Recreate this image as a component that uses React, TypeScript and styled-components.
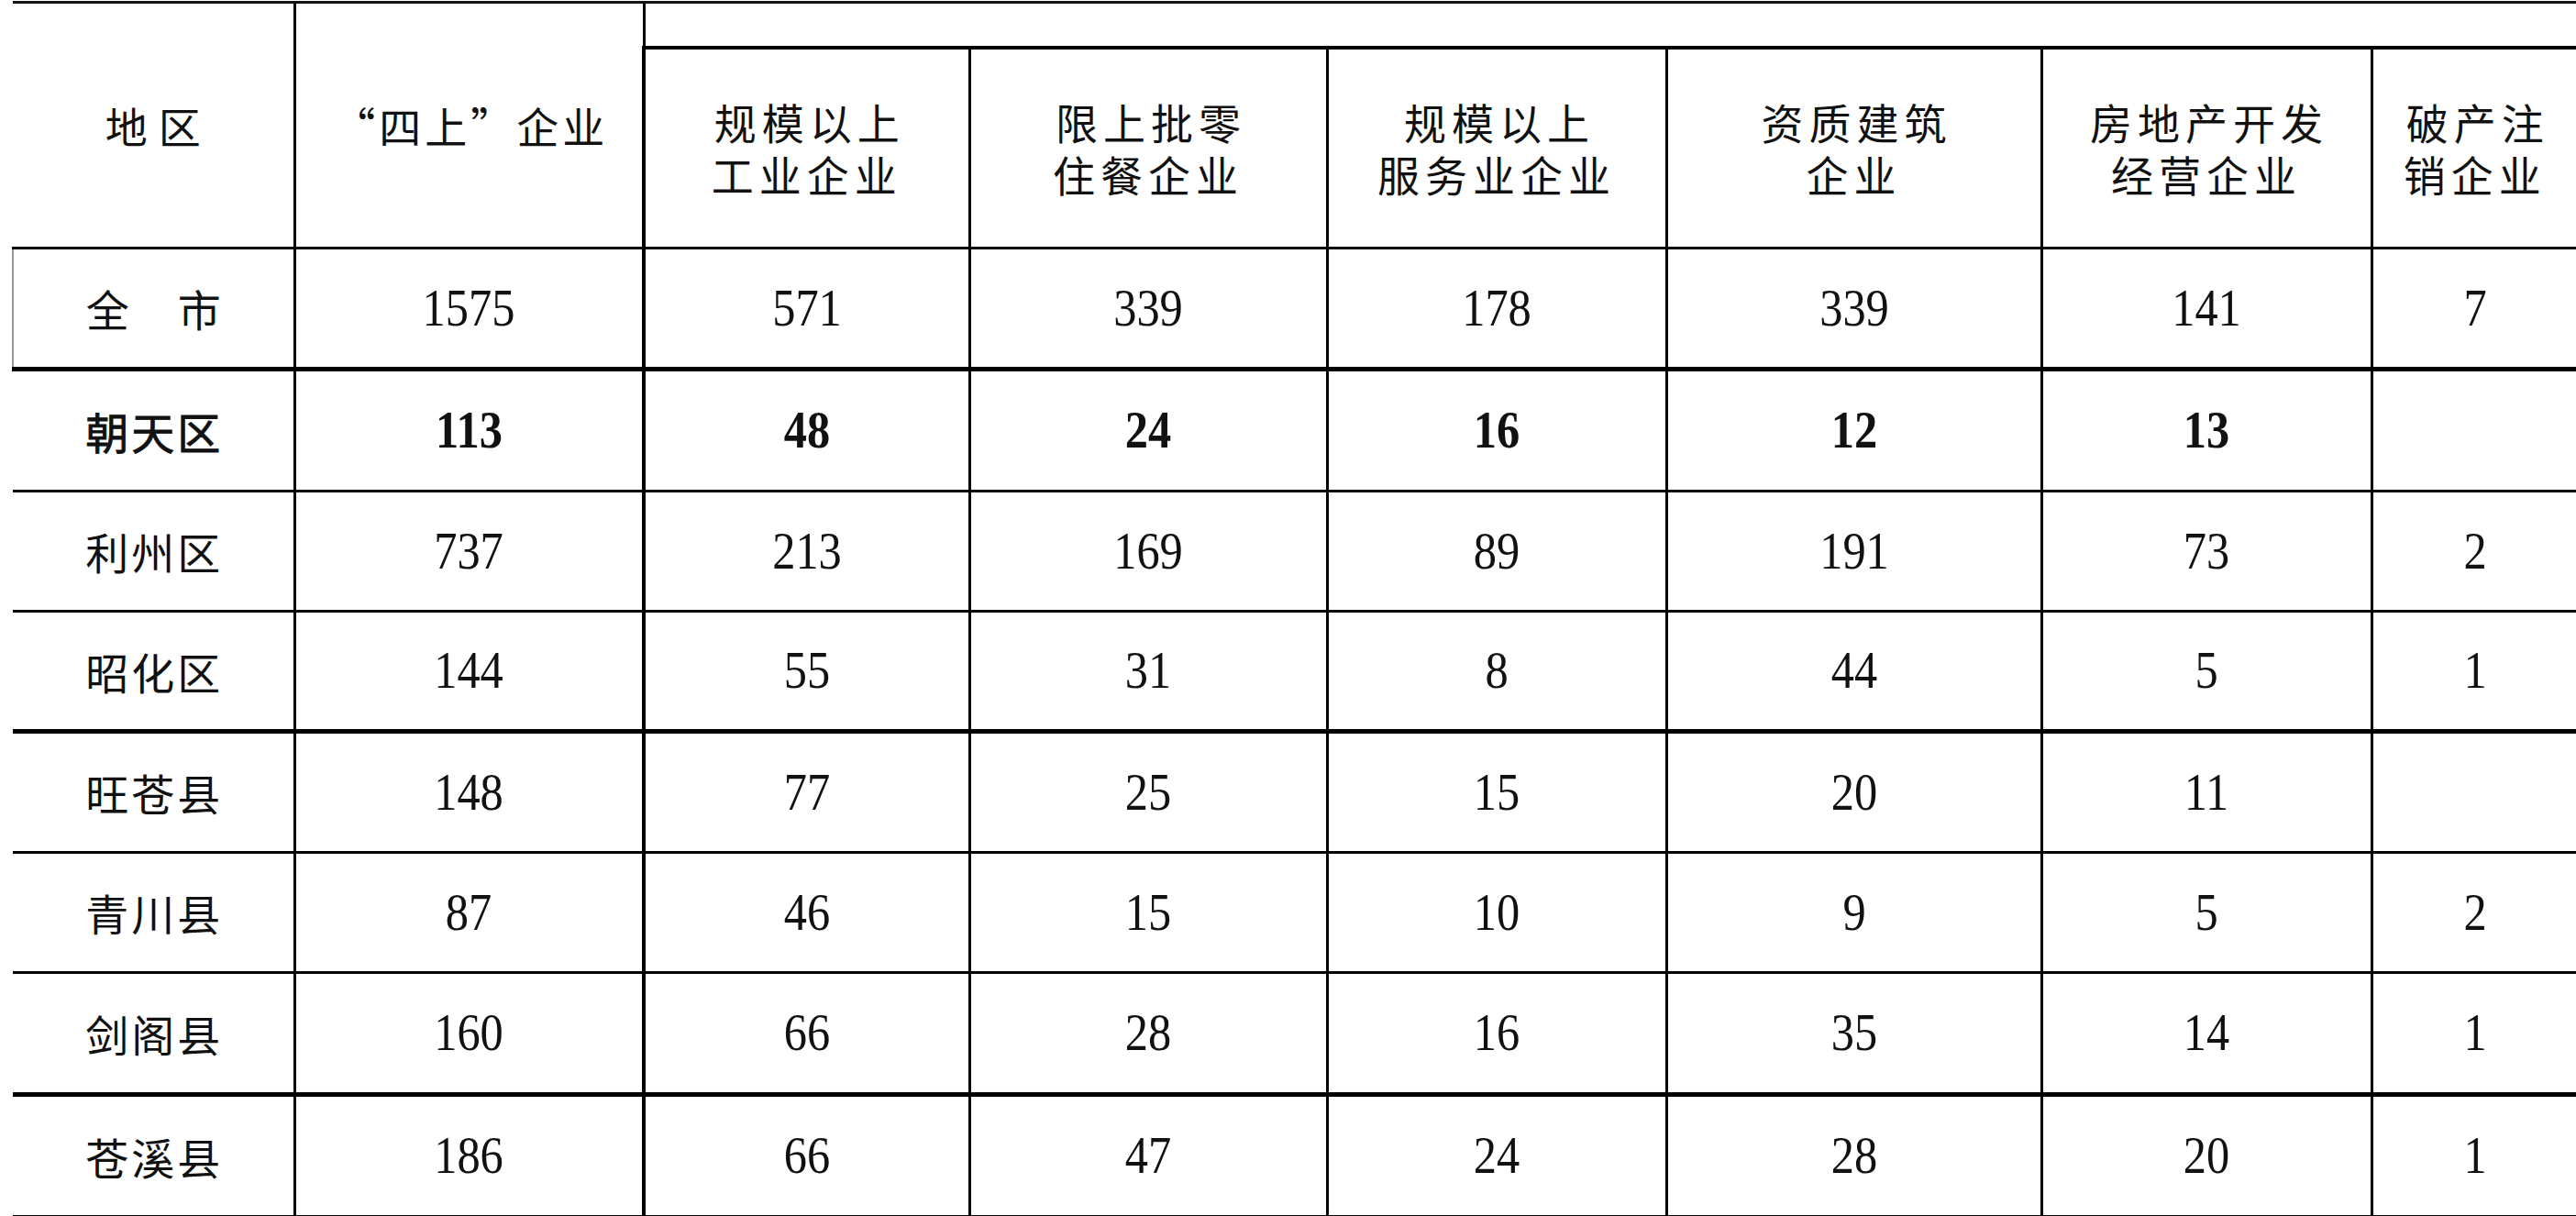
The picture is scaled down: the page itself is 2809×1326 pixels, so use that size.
import styled, { createGlobalStyle } from "styled-components";

const GlobalStyle = createGlobalStyle`
    html, body {
        margin: 0;
        padding: 0;
        background: #ffffff;
    }
`;

const Page = styled.div`
    padding: 1px 0 0 13px;
    width: 2796px;
`;

const Table = styled.table`
    width: 2796px;
    table-layout: fixed;
    border-collapse: collapse;
    color: #111;
`;

const Head = styled.th<{ $wide?: boolean; $first?: boolean; $topRow?: boolean; $spacing?: number }>`
    padding: 0;
    font-family: "Noto Sans CJK SC", "Noto Sans", sans-serif;
    font-weight: 400;
    font-size: 46px;
    line-height: 57px;
    letter-spacing: ${(p) => p.$spacing ?? 6}px;
    text-indent: ${(p) => p.$spacing ?? 6}px;
    text-align: center;
    vertical-align: middle;
    border-top: ${(p) => (p.$topRow ? "3px solid #151515" : "4px solid #000")};
    border-bottom: 3px solid #000;
    border-left: ${(p) => (p.$first ? "none" : p.$wide ? "4px solid #000" : "3px solid #000")};
`;

const Spacer = styled.th`
    padding: 0;
    height: 46px;
    border-top: 3px solid #151515;
    border-bottom: 4px solid #000;
    border-left: 3px solid #000;
`;

const Row = styled.tr<{ $h: number }>`
    height: ${(p) => p.$h}px;
`;

const Cell = styled.td<{ $bottom: number; $left?: string }>`
    padding: 0;
    text-align: center;
    vertical-align: middle;
    border-bottom: ${(p) => p.$bottom}px solid #000;
    border-left: ${(p) => p.$left ?? "3px solid #000"};
`;

const Name = styled.span<{ $bold?: boolean }>`
    font-family: "Noto Sans CJK SC", "Noto Sans", sans-serif;
    font-size: 47px;
    font-weight: 400;
    letter-spacing: 3px;
    padding-left: 3px;
    -webkit-text-stroke: ${(p) => (p.$bold ? "0.9px #111" : "0")};
`;

const Num = styled.span<{ $bold?: boolean }>`
    display: inline-block;
    font-family: "Liberation Serif", "Times New Roman", serif;
    font-size: 56px;
    font-weight: ${(p) => (p.$bold ? 700 : 400)};
    line-height: 1;
    transform: scaleX(0.9);
`;

const widths = [307, 381, 355, 390, 370, 409, 360, 224];

const headers = [
    ["规模以上", "工业企业"],
    ["限上批零", "住餐企业"],
    ["规模以上", "服务业企业"],
    ["资质建筑", "企业"],
    ["房地产开发", "经营企业"],
    ["破产注", "销企业"],
];

interface DataRow {
    name: string;
    values: string[];
    bottom: number;
    height: number;
    bold?: boolean;
    total?: boolean;
}

const rows: DataRow[] = [
    { name: "全\u3000市", values: ["1575", "571", "339", "178", "339", "141", "7"], bottom: 5, height: 132, total: true },
    { name: "朝天区", values: ["113", "48", "24", "16", "12", "13", ""], bottom: 3, height: 133, bold: true },
    { name: "利州区", values: ["737", "213", "169", "89", "191", "73", "2"], bottom: 3, height: 131 },
    { name: "昭化区", values: ["144", "55", "31", "8", "44", "5", "1"], bottom: 5, height: 131 },
    { name: "旺苍县", values: ["148", "77", "25", "15", "20", "11", ""], bottom: 3, height: 132 },
    { name: "青川县", values: ["87", "46", "15", "10", "9", "5", "2"], bottom: 3, height: 131 },
    { name: "剑阁县", values: ["160", "66", "28", "16", "35", "14", "1"], bottom: 5, height: 133 },
    { name: "苍溪县", values: ["186", "66", "47", "24", "28", "20", "1"], bottom: 3, height: 133 },
];

const App = () => {
    return (
        <Page>
            <GlobalStyle />
            <Table>
                <colgroup>
                    {widths.map((w, i) => (
                        <col key={i} style={{ width: w }} />
                    ))}
                </colgroup>
                <thead>
                    <tr>
                        <Head rowSpan={2} $first $topRow $spacing={12}>地区</Head>
                        <Head rowSpan={2} $topRow $spacing={4}>“四上”企业</Head>
                        <Spacer colSpan={6} />
                    </tr>
                    <Row $h={218}>
                        {headers.map((lines, i) => (
                            <Head key={i} $wide={i === 0}>
                                {lines[0]}
                                <br />
                                {lines[1]}
                            </Head>
                        ))}
                    </Row>
                </thead>
                <tbody>
                    {rows.map((row) => (
                        <Row key={row.name} $h={row.height}>
                            <Cell $bottom={row.bottom} $left={row.total ? "2px solid #9a9a9a" : "none"}>
                                <Name $bold={row.bold}>{row.name}</Name>
                            </Cell>
                            {row.values.map((v, i) => (
                                <Cell key={i} $bottom={row.bottom} $left={i === 1 ? "4px solid #000" : undefined}>
                                    {v && <Num $bold={row.bold}>{v}</Num>}
                                </Cell>
                            ))}
                        </Row>
                    ))}
                </tbody>
            </Table>
        </Page>
    );
};

export default App;
